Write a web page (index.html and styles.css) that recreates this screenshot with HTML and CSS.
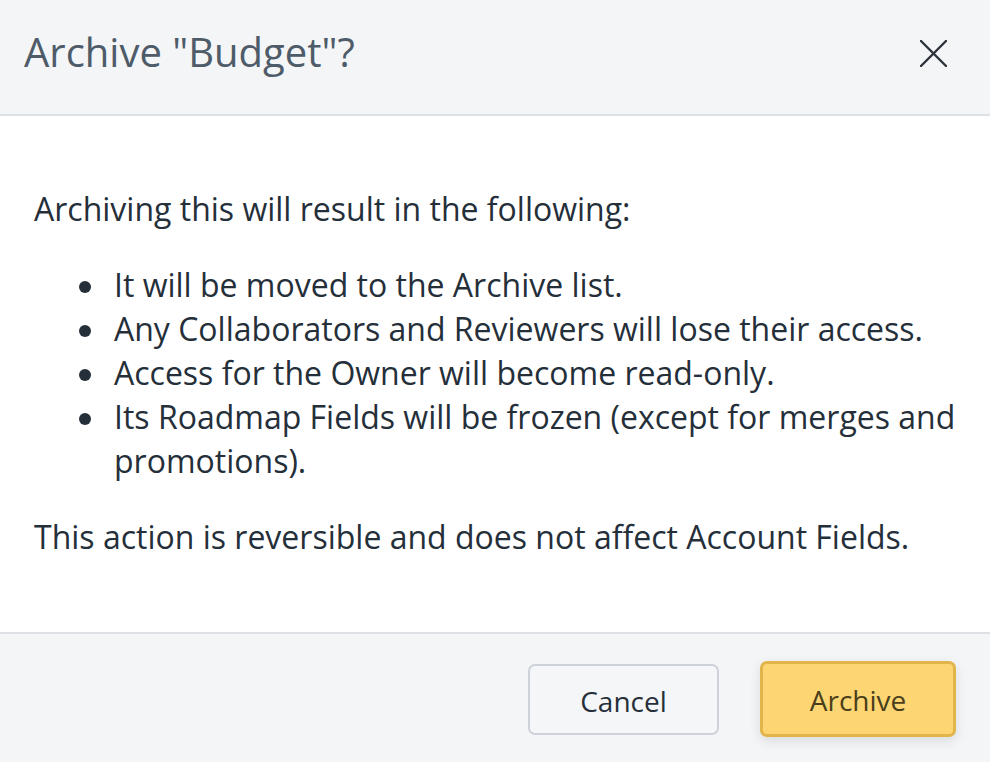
FILE: index.html
```html
<!DOCTYPE html>
<html lang="en">
<head>
<meta charset="utf-8">
<title>Archive "Budget"?</title>
<link rel="stylesheet" href="styles.css">
</head>
<body>
<div class="dialog">
  <header class="dialog-header">
    <h1 class="dialog-title">Archive "Budget"?</h1>
    <button class="close-btn" aria-label="Close">
      <svg width="27" height="27" viewBox="0 0 27 27" aria-hidden="true">
        <path d="M1 1 L26 26 M26 1 L1 26" stroke="#2c333b" stroke-width="2.4" stroke-linecap="round" fill="none"/>
      </svg>
    </button>
  </header>
  <section class="dialog-body">
    <p class="intro">Archiving this will result in the following:</p>
    <ul class="effects">
      <li>It will be moved to the Archive list.</li>
      <li>Any Collaborators and Reviewers will lose their access.</li>
      <li>Access for the Owner will become read-only.</li>
      <li>Its Roadmap Fields will be frozen (except for merges and promotions).</li>
    </ul>
    <p class="note">This action is reversible and does not affect Account Fields.</p>
  </section>
  <footer class="dialog-footer">
    <button class="btn btn-secondary">Cancel</button>
    <button class="btn btn-primary">Archive</button>
  </footer>
</div>
</body>
</html>
```
FILE: styles.css
```css
html, body {
  margin: 0;
  padding: 0;
  background: #ffffff;
}

body {
  font-family: "Open Sans", "Liberation Sans", sans-serif;
  color: #252f3a;
  width: 990px;
  height: 762px;
  overflow: hidden;
}

.dialog {
  display: flex;
  flex-direction: column;
  height: 762px;
}

.dialog-header {
  display: flex;
  justify-content: space-between;
  align-items: flex-start;
  background: #f4f5f7;
  border-bottom: 2px solid #dde1e5;
  padding: 24px 43px 34px 24px;
}

.dialog-title {
  margin: 0;
  font-size: 40px;
  line-height: 56px;
  font-weight: 400;
  color: #4e5b68;
}

.close-btn {
  margin-top: 16px;
  padding: 0;
  border: 0;
  background: transparent;
  width: 27px;
  height: 27px;
  display: flex;
  cursor: pointer;
}

.dialog-body {
  background: #ffffff;
  padding: 71px 34px 73px 34px;
  font-size: 32px;
  line-height: 44px;
}

.intro,
.note {
  margin: 0;
}

.effects {
  margin: 32px 0;
  padding-left: 80px;
  list-style: none;
}

.effects li {
  position: relative;
}

.effects li::before {
  content: "";
  position: absolute;
  left: -35px;
  top: 18px;
  width: 12px;
  height: 12px;
  border-radius: 50%;
  background: #252f3a;
}

.dialog-footer {
  flex: 1;
  display: flex;
  justify-content: flex-end;
  align-items: flex-start;
  gap: 41px;
  background: #f4f5f7;
  border-top: 2px solid #dde1e5;
  padding: 27px 34px 0 0;
}

.btn {
  font-family: "Open Sans", "Liberation Sans", sans-serif;
  font-size: 28px;
  border-radius: 7px;
  cursor: pointer;
  display: flex;
  align-items: center;
  justify-content: center;
  padding: 2px 0 0 0;
}

.btn-secondary {
  margin-top: 3px;
  width: 191px;
  height: 71px;
  background: #f5f6f8;
  border: 2px solid #ccd2d8;
  color: #27303a;
}

.btn-primary {
  width: 196px;
  height: 76px;
  background: #fdd673;
  border: 3px solid #e2b54b;
  color: #4a3e1c;
  box-shadow: 0 4px 12px rgba(40, 40, 40, 0.12);
}
```
